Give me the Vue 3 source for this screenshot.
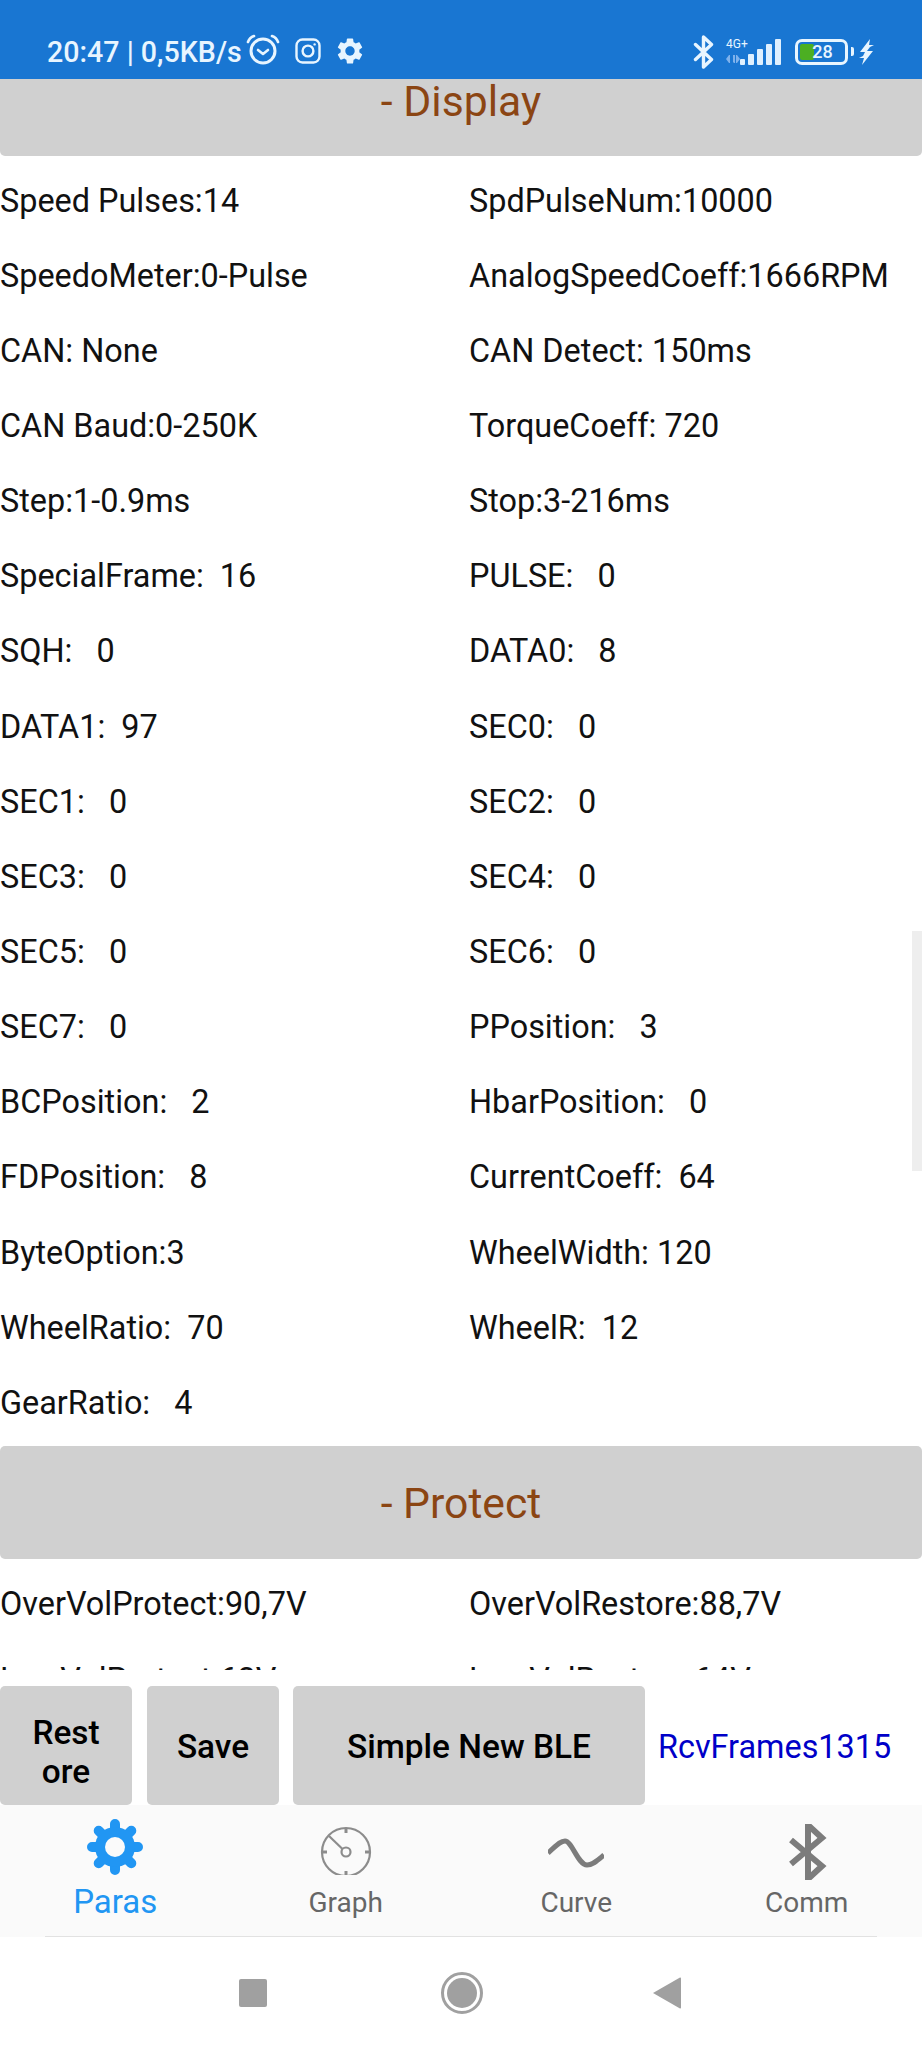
<script setup>
const displayRows = [
  'Speed Pulses:14', 'SpdPulseNum:10000',
  'SpeedoMeter:0-Pulse', 'AnalogSpeedCoeff:1666RPM',
  'CAN: None', 'CAN Detect: 150ms',
  'CAN Baud:0-250K', 'TorqueCoeff: 720',
  'Step:1-0.9ms', 'Stop:3-216ms',
  'SpecialFrame:  16', 'PULSE:   0',
  'SQH:   0', 'DATA0:   8',
  'DATA1:  97', 'SEC0:   0',
  'SEC1:   0', 'SEC2:   0',
  'SEC3:   0', 'SEC4:   0',
  'SEC5:   0', 'SEC6:   0',
  'SEC7:   0', 'PPosition:   3',
  'BCPosition:   2', 'HbarPosition:   0',
  'FDPosition:   8', 'CurrentCoeff:  64',
  'ByteOption:3', 'WheelWidth: 120',
  'WheelRatio:  70', 'WheelR:  12',
  'GearRatio:   4', ''
]
const protectRows = [
  'OverVolProtect:90,7V', 'OverVolRestore:88,7V',
  'LowVolProtect:62V', 'LowVolRestore:64V'
]
const settingsPath = 'M19.14,12.94c0.04-0.3,0.06-0.61,0.06-0.94c0-0.32-0.02-0.64-0.07-0.94l2.03-1.58c0.18-0.14,0.23-0.41,0.12-0.61l-1.92-3.32c-0.12-0.22-0.37-0.29-0.59-0.22l-2.39,0.96c-0.5-0.38-1.03-0.7-1.62-0.94L14.4,2.81c-0.04-0.24-0.24-0.41-0.48-0.41h-3.84c-0.24,0-0.43,0.17-0.47,0.41L9.25,5.35C8.66,5.59,8.12,5.92,7.63,6.29L5.24,5.33c-0.22-0.08-0.47,0-0.59,0.22L2.74,8.87C2.62,9.08,2.66,9.34,2.86,9.48l2.03,1.58C4.84,11.36,4.8,11.69,4.8,12s0.02,0.64,0.07,0.94l-2.03,1.58c-0.18,0.14-0.23,0.41-0.12,0.61l1.92,3.32c0.12,0.22,0.37,0.29,0.59,0.22l2.39-0.96c0.5,0.38,1.03,0.7,1.62,0.94l0.36,2.54c0.05,0.24,0.24,0.41,0.48,0.41h3.84c0.24,0,0.44-0.17,0.47-0.41l0.36-2.54c0.59-0.24,1.13-0.56,1.62-0.94l2.39,0.96c0.22,0.08,0.47,0,0.59-0.22l1.92-3.32c0.12-0.22,0.07-0.47-0.12-0.61L19.14,12.94z M12,15.6c-1.98,0-3.6-1.62-3.6-3.6s1.62-3.6,3.6-3.6s3.6,1.62,3.6,3.6S13.98,15.6,12,15.6z'
</script>

<template>
  <div class="phone">
    <header class="status-bar">
      <div class="status-left">
        <span class="clock">20:47 | 0,5KB/s</span>
        <svg class="ic-alarm" viewBox="0 0 34 32" width="34" height="32" fill="none" stroke="#e8f5ff">
          <circle cx="17" cy="18" r="12" stroke-width="3" />
          <path d="M12 17l5 4 5-4" stroke-width="2.6" stroke-linecap="round" stroke-linejoin="round" />
          <path d="M2 9c1-3 3-5 6-6M32 9c-1-3-3-5-6-6" stroke-width="2.6" stroke-linecap="round" />
        </svg>
        <svg class="ic-insta" viewBox="0 0 26 26" width="26" height="26" fill="none" stroke="#e8f5ff" stroke-width="2.4">
          <rect x="1.5" y="1.5" width="23" height="23" rx="6" />
          <circle cx="13" cy="13" r="5.4" />
          <circle cx="19.6" cy="6.4" r="1.2" fill="#e8f5ff" stroke="none" />
        </svg>
        <svg class="ic-gear" viewBox="2 2 20 20" width="26" height="26" fill="#e8f5ff"><path :d="settingsPath" /></svg>
      </div>
      <div class="status-right">
        <svg class="ic-bt" viewBox="0 0 22 34" width="22" height="34" fill="none" stroke="#e8f5ff" stroke-width="3.4" stroke-linejoin="round" stroke-linecap="round">
          <path d="M2.5 9.5l16 15-8 7.5V2l8 7.5-16 15" />
        </svg>
        <div class="net">
          <span class="net-label">4G+</span>
          <svg class="net-arrows" viewBox="0 0 16 10" width="16" height="10" fill="#7fb2ec">
            <path d="M0 5l3-4h1v8H3zM7 1h2v8H8l-1-1zM10 1h1l3 4-3 4h-1z" />
          </svg>
        </div>
        <div class="signal">
          <i class="b1"></i><i class="b2"></i><i class="b3"></i><i class="b4"></i><i class="b5"></i>
        </div>
        <div class="battery">
          <span class="battery-fill"></span>
          <span class="battery-num">28</span>
        </div>
        <span class="battery-nub"></span>
        <svg class="ic-bolt" viewBox="0 0 16 26" width="16" height="26" fill="#e8f5ff">
          <path d="M11 0L1 13l5 0-2 4-4 2 5 0-2 7 11-14-6 0 3-4 4-2-5 0z" />
        </svg>
      </div>
    </header>

    <main class="scroller">
      <div class="content">
        <div class="section-bar">- Display</div>
        <div class="para-grid">
          <div v-for="(item, i) in displayRows" :key="i" class="para">{{ item }}</div>
        </div>
        <div class="section-bar">- Protect</div>
        <div class="para-grid protect">
          <div v-for="(item, i) in protectRows" :key="i" class="para">{{ item }}</div>
        </div>
      </div>
      <span class="scroll-thumb"></span>
    </main>

    <div class="actions">
      <button class="btn btn-restore">Restore</button>
      <button class="btn btn-save">Save</button>
      <button class="btn btn-ble">Simple New BLE</button>
      <span class="frames">RcvFrames1315</span>
    </div>

    <nav class="tabs">
      <div class="tab active">
        <svg class="tab-icon" viewBox="0 0 56 56" width="56" height="56">
          <g stroke="#2196f3" stroke-width="10" stroke-linecap="round">
            <path d="M28 5v46M5 28h46M11.7 11.7l32.6 32.6M44.3 11.7L11.7 44.3" />
          </g>
          <circle cx="28" cy="28" r="20" fill="#2196f3" />
          <circle cx="28" cy="28" r="10" fill="#fafafa" />
        </svg>
        <span class="tab-label">Paras</span>
      </div>
      <div class="tab">
        <svg class="tab-icon" viewBox="0 0 56 56" width="56" height="56" fill="none" stroke="#8c8c8c">
          <circle cx="28" cy="33" r="24" stroke-width="2.2" />
          <path d="M28 9v5M28 52v5M4 33h5M47 33h5" stroke-width="3" />
          <circle cx="28" cy="33" r="4.5" stroke-width="2.2" />
          <path d="M24.5 30L11 17" stroke-width="2.2" />
        </svg>
        <span class="tab-label">Graph</span>
      </div>
      <div class="tab">
        <svg class="tab-icon" viewBox="0 0 56 56" width="56" height="56" fill="none" stroke="#7c7c7c" stroke-width="5">
          <path d="M0 34C8 27 12 22 17 22C24 22 30 46 39 46C45 46 50 41 56 36" />
        </svg>
        <span class="tab-label">Curve</span>
      </div>
      <div class="tab">
        <svg class="tab-icon bt-tab" viewBox="0 0 56 56" width="56" height="56" fill="none" stroke="#7c7c7c" stroke-width="6">
          <path d="M12 16l31 26-14 13V1l14 13-31 26" />
        </svg>
        <span class="tab-label">Comm</span>
      </div>
    </nav>

    <footer class="nav-bar">
      <span class="nav-square"></span>
      <span class="nav-circle"></span>
      <svg class="nav-back" viewBox="0 0 28 32" width="28" height="32" fill="#a0a0a0">
        <path d="M27 0.5c0.6 0 1 0.4 1 1v29c0 0.6-0.4 1-1 1L0 16z" />
      </svg>
    </footer>
  </div>
</template>

<style>
html, body {
  margin: 0;
  background: #ffffff;
}
</style>

<style scoped>
.phone {
  width: 922px;
  height: 2048px;
  display: flex;
  flex-direction: column;
  overflow: hidden;
  background: #ffffff;
  font-family: Roboto, "Liberation Sans", sans-serif;
  color: #111111;
}

/* status bar */
.status-bar {
  height: 79px;
  flex: none;
  box-sizing: border-box;
  padding: 0 47px 0 47px;
  display: flex;
  justify-content: space-between;
  align-items: center;
  background: #1976d2;
  color: #e8f5ff;
}
.status-left,
.status-right {
  display: flex;
  align-items: center;
  margin-top: 24px;
}
.clock {
  font-size: 28.6px;
  font-weight: 500;
  white-space: pre;
}
.ic-alarm { margin-left: 4px; margin-top: -5px; }
.ic-insta { margin-left: 15px; margin-top: -2px; }
.ic-gear { margin-left: 16px; margin-top: -2px; }

.ic-bt { margin-right: 11px; }
.net {
  width: 26px;
  display: flex;
  flex-direction: column;
  gap: 4px;
  margin-top: -1px;
}
.net-label {
  font-size: 12px;
  line-height: 12px;
  white-space: nowrap;
}
.signal {
  display: flex;
  align-items: flex-end;
  gap: 3px;
  height: 26px;
  margin-left: -12px;
}
.signal i {
  display: block;
  width: 6px;
  background: #dff0ff;
  border-radius: 1px;
}
.signal .b1 { width: 5px; height: 6px; }
.signal .b2 { height: 11px; }
.signal .b3 { height: 16px; }
.signal .b4 { height: 21px; }
.signal .b5 { height: 26px; }

.battery {
  position: relative;
  width: 53px;
  height: 26px;
  box-sizing: border-box;
  margin-left: 14px;
  border: 3px solid #e8f5ff;
  border-radius: 7px;
  display: flex;
  align-items: center;
  justify-content: center;
  overflow: hidden;
}
.battery-fill {
  position: absolute;
  left: 2px;
  top: 2px;
  bottom: 2px;
  width: 14px;
  background: #4caf22;
  border-radius: 2px;
}
.battery-num {
  position: relative;
  font-size: 18px;
  font-weight: 500;
  line-height: 1;
  margin-left: 2px;
}
.battery-nub {
  width: 3px;
  height: 9px;
  margin-left: 3px;
  background: #e8f5ff;
  border-radius: 0 2px 2px 0;
}
.ic-bolt { margin-left: 5px; }

/* scrolling parameter list */
.scroller {
  position: relative;
  flex: none;
  height: 1591px;
  overflow: hidden;
}
.content {
  margin-top: -36px;
}
.section-bar {
  height: 113px;
  box-sizing: border-box;
  padding-top: 2px;
  display: flex;
  align-items: center;
  justify-content: center;
  background: #d0d0d0;
  border-radius: 5px;
  color: #8b4513;
  font-size: 42.7px;
}
.para-grid {
  display: grid;
  grid-template-columns: 469px 1fr;
  grid-auto-rows: 75.15px;
  margin: 7px 0 5.5px;
}
.para-grid.protect { margin: 8px 0 0; }
.para {
  display: flex;
  align-items: center;
  white-space: pre;
  font-size: 32.4px;
}
.scroll-thumb {
  position: absolute;
  right: 0;
  top: 852px;
  width: 10px;
  height: 240px;
  background: #eeeeee;
}

/* action row */
.actions {
  flex: none;
  height: 135px;
  box-sizing: border-box;
  padding-top: 16px;
  display: flex;
  align-items: stretch;
}
.btn {
  border: none;
  border-radius: 5px;
  background: #d0d0d0;
  color: #000000;
  font-family: inherit;
  font-size: 33.4px;
  font-weight: 500;
  line-height: 39px;
  padding: 2px 0 0;
  margin-right: 14px;
}
.btn-restore { width: 132px; margin-right: 15px; padding: 12px 28px 0; word-break: break-all; }
.btn-save { width: 132px; }
.btn-ble { width: 352px; margin-right: 0; }
.frames {
  align-self: center;
  margin: 2px 0 0 13px;
  color: #0000c8;
  font-size: 32.4px;
  white-space: nowrap;
}

/* bottom tabs */
.tabs {
  flex: none;
  height: 132px;
  display: grid;
  grid-template-columns: repeat(4, 1fr);
  background: #fafafa;
  position: relative;
}
.tabs::after {
  content: "";
  position: absolute;
  left: 45px;
  right: 45px;
  bottom: 0;
  height: 1px;
  background: #e2e2e2;
}
.tab {
  display: flex;
  flex-direction: column;
  align-items: center;
  color: #666666;
  padding-top: 14px;
}
.tab-icon { display: block; }
.bt-tab { transform: translateY(5px); }
.tab-label {
  font-size: 28px;
  line-height: 34px;
  margin-top: 11px;
}
.tab.active .tab-label {
  color: #2196f3;
  font-size: 33px;
  line-height: 36px;
  margin-top: 9px;
}

/* android nav bar */
.nav-bar {
  flex: 1;
  position: relative;
  display: flex;
  align-items: center;
  justify-content: center;
  padding-right: 2px;
}
.nav-square {
  width: 28px;
  height: 28px;
  margin-right: 174px;
  background: #a0a0a0;
  border-radius: 2px;
}
.nav-circle {
  width: 42px;
  height: 42px;
  box-sizing: border-box;
  border: 3px solid #a0a0a0;
  border-radius: 50%;
  padding: 3px;
  background: #a0a0a0 content-box;
}
.nav-back { margin-left: 170px; }
</style>
